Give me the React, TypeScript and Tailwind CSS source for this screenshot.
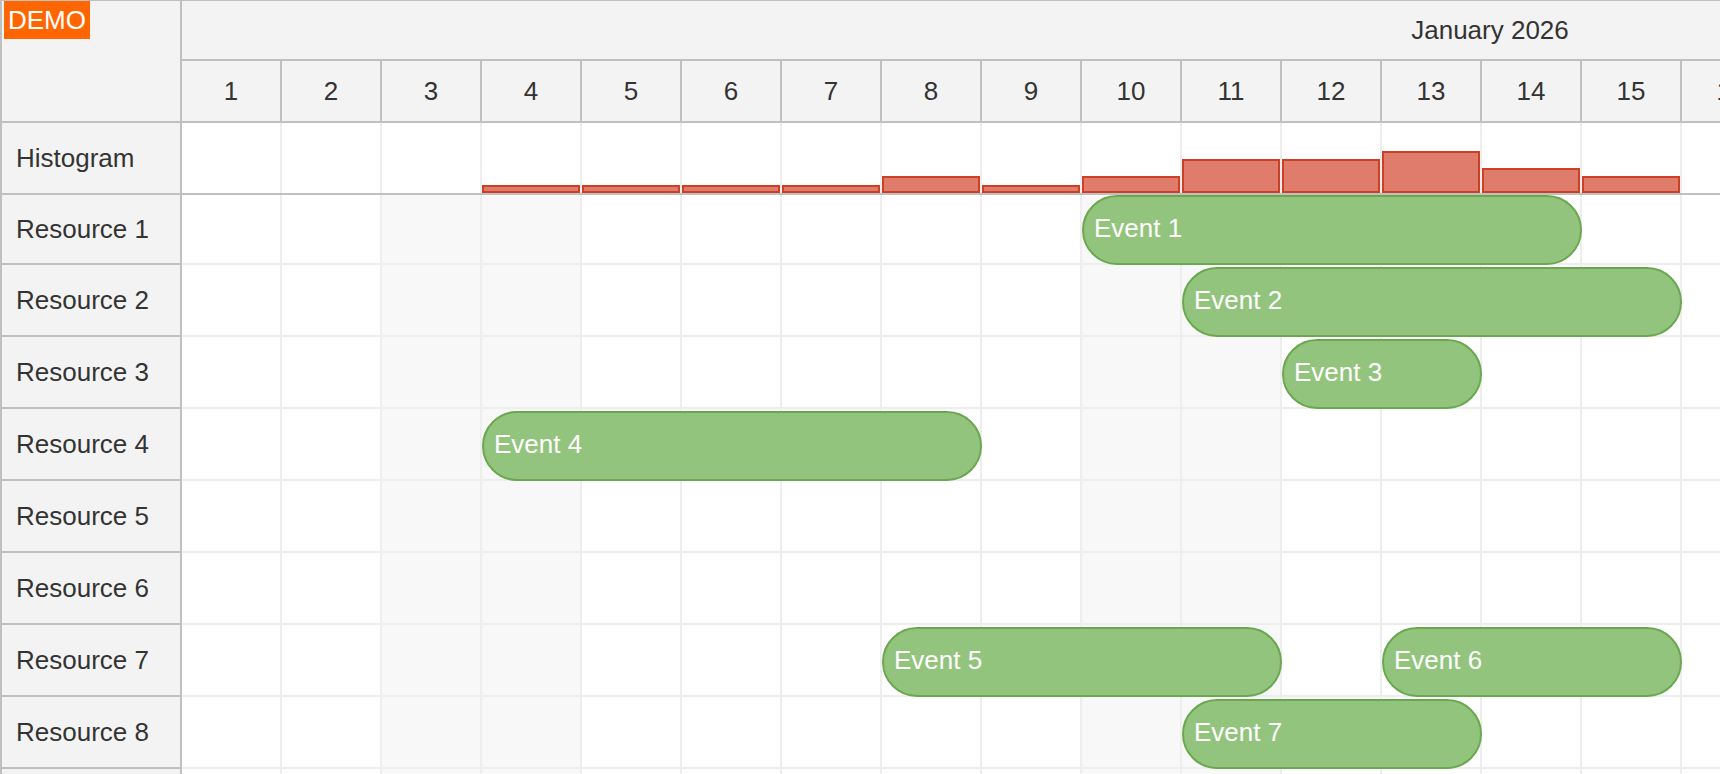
type CalEvent = {
  id: number;
  text: string;
  resource: number;
  start: number;
  days: number;
};

const CELL_W = 100;
const DAYS = Array.from({ length: 17 }, (_, i) => i + 1);
const WEEKENDS = [3, 4, 10, 11, 17];
const RESOURCES = Array.from({ length: 9 }, (_, i) => ({
  id: i + 1,
  name: `Resource ${i + 1}`,
}));

const EVENTS: CalEvent[] = [
  { id: 1, text: "Event 1", resource: 1, start: 10, days: 5 },
  { id: 2, text: "Event 2", resource: 2, start: 11, days: 5 },
  { id: 3, text: "Event 3", resource: 3, start: 12, days: 2 },
  { id: 4, text: "Event 4", resource: 4, start: 4, days: 5 },
  { id: 5, text: "Event 5", resource: 7, start: 8, days: 4 },
  { id: 6, text: "Event 6", resource: 7, start: 13, days: 3 },
  { id: 7, text: "Event 7", resource: 8, start: 11, days: 3 },
];

/** 日ごとのイベント件数を数える */
function buildHistogram(events: CalEvent[]) {
  return DAYS.map((day) => ({
    day,
    count: events.filter((e) => day >= e.start && day < e.start + e.days)
      .length,
  }));
}

/** 左上のコーナー + 月/日ヘッダー */
function Header() {
  return (
    <div className="flex shrink-0">
      <div className="h-[122px] w-[180px] shrink-0 border-r-2 border-b-2 border-[#c0c0c0] bg-[#f3f3f3]">
        <span className="ml-[2px] inline-flex h-[38px] w-[86px] items-center justify-center bg-[#ff6600] text-[26px] leading-none text-white">
          DEMO
        </span>
      </div>
      <div className="flex flex-col">
        {/* 月 */}
        <div className="flex h-[60px] border-b-2 border-[#c0c0c0] bg-[#f3f3f3]">
          <div className="flex w-[2616px] shrink-0 items-center justify-center text-[26px] leading-none text-[#333]">
            January 2026
          </div>
        </div>
        {/* 日 */}
        <div className="flex h-[62px] border-b-2 border-[#c0c0c0] bg-[#f3f3f3]">
          {DAYS.map((d) => (
            <div
              key={d}
              className="flex w-[100px] shrink-0 items-center justify-center border-r-2 border-[#c0c0c0] text-[26px] leading-none text-[#333]"
            >
              {d}
            </div>
          ))}
        </div>
      </div>
    </div>
  );
}

/** ヒストグラム行 */
function HistogramRow() {
  const data = buildHistogram(EVENTS);
  const unit = 8.4;

  return (
    <div className="flex h-[72px] shrink-0 border-b-2 border-[#c0c0c0]">
      <div className="flex w-[180px] shrink-0 items-center border-r-2 border-[#c0c0c0] bg-[#f3f3f3] pl-[14px] text-[26px] leading-none text-[#333]">
        Histogram
      </div>
      {data.map((d) => (
        <div
          key={d.day}
          className="flex w-[100px] shrink-0 items-end border-r-2 border-[#eeeeee] bg-white"
        >
          {d.count > 0 && (
            <div
              className="w-full border-2 border-[#cc4125] bg-[#e07c6b]"
              style={{ height: Math.round(d.count * unit) }}
            />
          )}
        </div>
      ))}
    </div>
  );
}

/** リソース行（グリッド + イベント） */
function ResourceRow({ id, name, first }: { id: number; name: string; first: boolean }) {
  const events = EVENTS.filter((e) => e.resource === id);

  return (
    <div className={["flex shrink-0", first ? "h-[70px]" : "h-[72px]"].join(" ")}>
      <div className="flex w-[180px] shrink-0 items-center border-r-2 border-b-2 border-[#c0c0c0] bg-[#f3f3f3] pl-[14px] text-[26px] leading-none text-[#333]">
        {name}
      </div>
      <div className="relative flex">
        {DAYS.map((d) => (
          <div
            key={d}
            className={[
              "w-[100px] shrink-0 border-r-2 border-b-2 border-[#eeeeee]",
              WEEKENDS.includes(d) ? "bg-[#f8f8f8]" : "bg-white",
            ].join(" ")}
          />
        ))}

        {/* イベント */}
        {events.map((e) => (
          <div
            key={e.id}
            className={[
              "absolute flex h-[70px] items-center rounded-full border-2 border-[#6aa84f] bg-[#93c47d] pb-[4px] pl-[10px] text-[26px] leading-none text-white",
              first ? "top-0" : "top-[2px]",
            ].join(" ")}
            style={{ left: (e.start - 1) * CELL_W, width: e.days * CELL_W }}
          >
            {e.text}
          </div>
        ))}
      </div>
    </div>
  );
}

export default function App() {
  return (
    <div
      className="flex h-[774px] w-[1720px] flex-col overflow-hidden border-t border-l-2 border-[#c0c0c0] bg-white"
      style={{ fontFamily: '"Liberation Sans", Arial, sans-serif' }}
    >
      <Header />
      <HistogramRow />
      {RESOURCES.map((r, i) => (
        <ResourceRow key={r.id} id={r.id} name={r.name} first={i === 0} />
      ))}
    </div>
  );
}
